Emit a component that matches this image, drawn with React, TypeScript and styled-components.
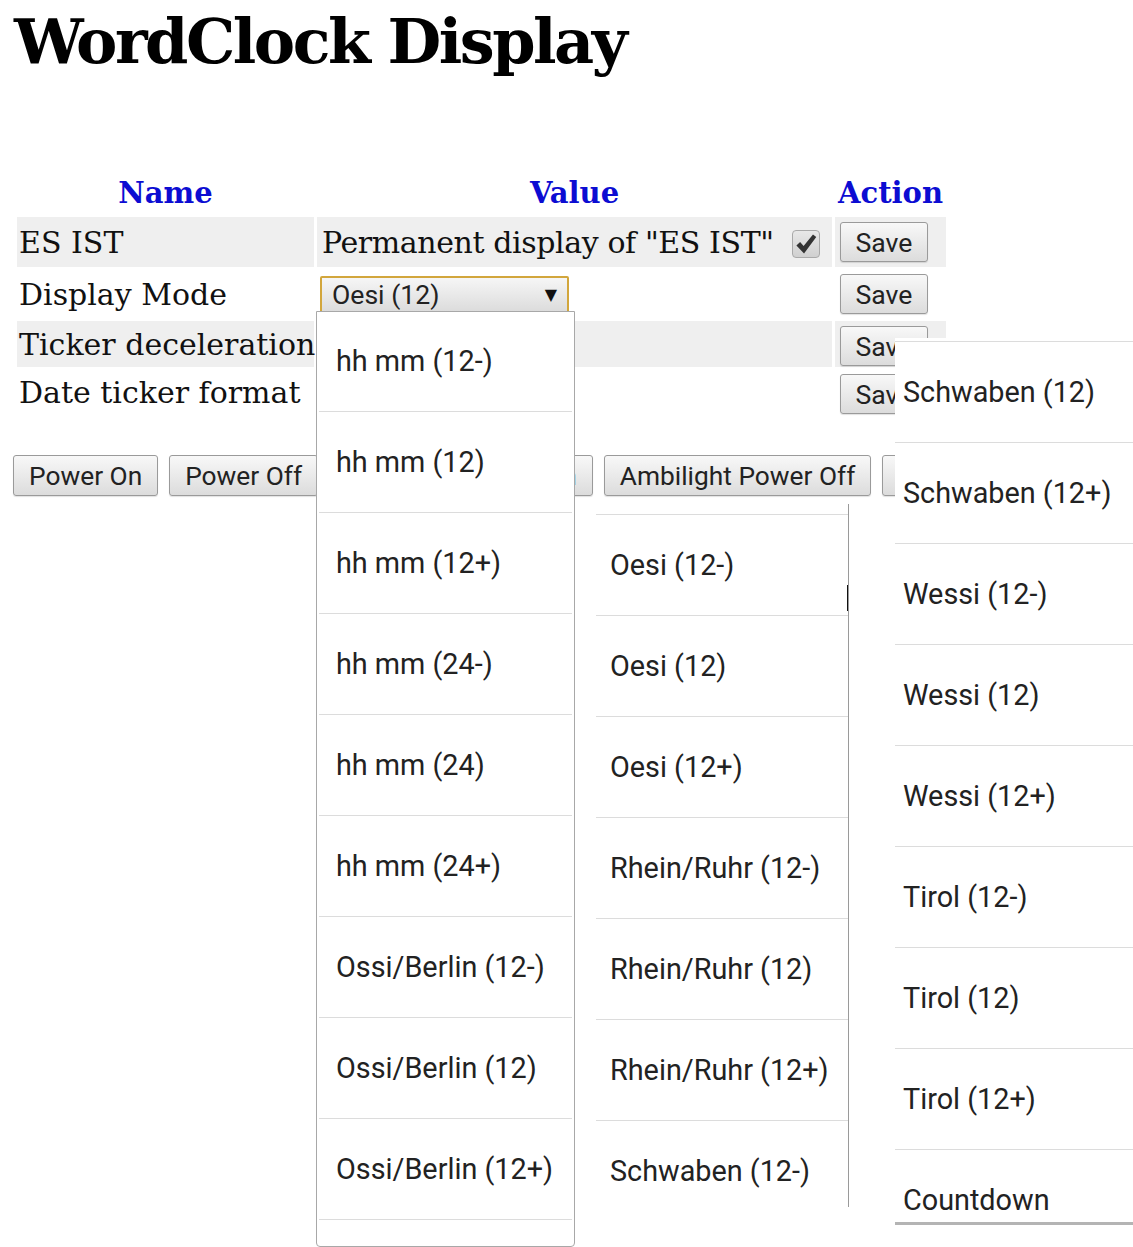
import React from 'react';
import styled, { createGlobalStyle } from 'styled-components';

const GlobalStyle = createGlobalStyle`
  html, body {
    margin: 0;
    padding: 0;
    background: #ffffff;
    overflow: hidden;
  }
  body {
    font-family: "DejaVu Serif", "Liberation Serif", serif;
    color: #111;
  }
`;

const Page = styled.div`
  position: relative;
  width: 1133px;
  height: 1247px;
  padding: 0 0 0 14px;
  box-sizing: border-box;
`;

const Title = styled.h1`
  margin: 0;
  padding-top: 2px;
  height: 166px;
  font-family: "DejaVu Serif", serif;
  font-size: 62px;
  font-weight: bold;
  line-height: 80px;
  letter-spacing: -2.5px;
  color: #000;
`;

const Table = styled.table`
  border-collapse: separate;
  border-spacing: 3px 2px;
  table-layout: fixed;
  width: 935px;
`;

const Col = styled.col<{ $w: number }>`
  width: ${(p) => p.$w}px;
`;

const HeadCell = styled.th`
  height: 45px;
  padding: 0;
  font-size: 29px;
  font-weight: bold;
  color: #0c0cd2;
  text-align: center;
`;

const Cell = styled.td<{ $shaded?: boolean; $h: number }>`
  height: ${(p) => p.$h}px;
  padding: 0 0 0 2px;
  background: ${(p) => (p.$shaded ? '#efefef' : 'transparent')};
  font-size: 30px;
  white-space: nowrap;
  vertical-align: middle;
  box-sizing: border-box;
  overflow: visible;
`;

const ValueCell = styled(Cell)`
  padding-left: 5px;
  letter-spacing: -0.4px;
`;

const ActionCell = styled(Cell)`
  padding: 5px 0 0 5px;
  vertical-align: top;
`;

const Check = styled.span`
  display: inline-flex;
  align-items: center;
  justify-content: center;
  width: 28px;
  height: 28px;
  margin-left: 18px;
  vertical-align: -3px;
  box-sizing: border-box;
  border: 1px solid #a9a9a9;
  border-radius: 4px;
  background: linear-gradient(#e8e8e8, #d0d0d0);
`;

const Button = styled.button`
  height: 41px;
  padding: 0 15px;
  font-family: Roboto, "Noto Sans", sans-serif;
  font-size: 26.3px;
  color: #222;
  background: linear-gradient(#f8f8f8, #dcdcdc);
  border: 1px solid #9a9a9a;
  border-radius: 3px;
  box-shadow: 0 1px 1px rgba(0, 0, 0, 0.12);
  white-space: nowrap;
`;

const SaveButton = styled(Button)`
  height: 40px;
  width: 88px;
  padding: 0;
  font-size: 26.6px;
`;

const Select = styled.div`
  display: flex;
  align-items: center;
  justify-content: space-between;
  width: 249px;
  height: 37px;
  box-sizing: border-box;
  margin-left: -2px;
  padding: 0 10px 0 10px;
  border: 2px solid #d2a63c;
  border-radius: 2px;
  background: linear-gradient(#f6f6f6, #dcdcdc);
  font-family: Roboto, "Noto Sans", sans-serif;
  font-size: 26.6px;
  letter-spacing: 0;
  color: #222;
`;

const Arrow = styled.span`
  font-family: "DejaVu Sans", sans-serif;
  font-size: 16px;
  color: #111;
`;

const ButtonRow = styled.div`
  display: flex;
  gap: 11px;
  margin: 38px 0 0 -1px;
`;

const Panel = styled.div<{ $left: number; $top: number; $width: number; $height: number }>`
  position: absolute;
  left: ${(p) => p.$left}px;
  top: ${(p) => p.$top}px;
  width: ${(p) => p.$width}px;
  height: ${(p) => p.$height}px;
  background: #fff;
  overflow: hidden;
  box-sizing: border-box;
`;

const PanelMain = styled(Panel)`
  border: 1px solid #a8a8a8;
  border-radius: 0 0 4px 4px;
`;

const PanelMid = styled(Panel)`
  border-right: 1px solid #9a9a9a;
  padding-top: 10px;
  &::after {
    content: '';
    position: absolute;
    right: -1px;
    top: 81px;
    width: 2px;
    height: 26px;
    background: #111;
  }
`;

const PanelRight = styled(Panel)`
  padding-top: 3px;
  border-bottom: 3px solid #b4b4b4;
`;

const List = styled.div<{ $shift: number }>`
  margin-top: ${(p) => p.$shift}px;
`;

const Option = styled.div<{ $indent: number; $sepLeft: number; $sepRight: number }>`
  position: relative;
  height: 101px;
  box-sizing: border-box;
  display: flex;
  align-items: center;
  padding-left: ${(p) => p.$indent}px;
  padding-top: 1px;
  font-family: Roboto, "Noto Sans", sans-serif;
  font-size: 28.8px;
  color: #222;
  white-space: nowrap;
  &::before {
    content: '';
    position: absolute;
    top: 0;
    left: ${(p) => p.$sepLeft}px;
    right: ${(p) => p.$sepRight}px;
    height: 1px;
    background: #dcdcdc;
  }
`;

const rows = [
  { name: 'ES IST', shaded: true, h: 50 },
  { name: 'Display Mode', shaded: false, h: 50 },
  { name: 'Ticker deceleration', shaded: true, h: 46 },
  { name: 'Date ticker format', shaded: false, h: 46 },
];

const col1 = [
  'hh mm (12-)',
  'hh mm (12)',
  'hh mm (12+)',
  'hh mm (24-)',
  'hh mm (24)',
  'hh mm (24+)',
  'Ossi/Berlin (12-)',
  'Ossi/Berlin (12)',
  'Ossi/Berlin (12+)',
  '',
];
const col2 = ['Oesi (12-)', 'Oesi (12)', 'Oesi (12+)', 'Rhein/Ruhr (12-)', 'Rhein/Ruhr (12)', 'Rhein/Ruhr (12+)', 'Schwaben (12-)'];
const col3 = ['Schwaben (12)', 'Schwaben (12+)', 'Wessi (12-)', 'Wessi (12)', 'Wessi (12+)', 'Tirol (12-)', 'Tirol (12)', 'Tirol (12+)', 'Countdown'];

function CheckMark() {
  return (
    <svg width="24" height="24" viewBox="0 0 22 22">
      <path d="M2.2 12.4 L5.6 9.2 L8.8 12.8 L17.4 2.2 L20.4 4.6 L9.2 19.6 Z" fill="#333" />
    </svg>
  );
}

function renderValue(i: number) {
  if (i === 0)
    return (
      <>
        Permanent display of "ES IST"
        <Check>
          <CheckMark />
        </Check>
      </>
    );
  if (i === 1)
    return (
      <Select>
        Oesi (12)
        <Arrow>▼</Arrow>
      </Select>
    );
  return null;
}

export default function App(): JSX.Element {
  return (
    <>
      <GlobalStyle />
      <Page>
        <Title>WordClock Display</Title>
        <Table>
          <colgroup>
            <Col $w={297} />
            <Col $w={515} />
            <Col $w={111} />
          </colgroup>
          <thead>
            <tr>
              <HeadCell>Name</HeadCell>
              <HeadCell>Value</HeadCell>
              <HeadCell>Action</HeadCell>
            </tr>
          </thead>
          <tbody>
            {rows.map((r, i) => (
              <tr key={r.name}>
                <Cell $shaded={r.shaded} $h={r.h}>
                  {r.name}
                </Cell>
                <ValueCell $shaded={r.shaded} $h={r.h}>
                  {renderValue(i)}
                </ValueCell>
                <ActionCell $shaded={r.shaded} $h={r.h}>
                  <SaveButton>Save</SaveButton>
                </ActionCell>
              </tr>
            ))}
          </tbody>
        </Table>
        <ButtonRow>
          <Button>Power On</Button>
          <Button>Power Off</Button>
          <Button>Ambilight Power On</Button>
          <Button>Ambilight Power Off</Button>
          <Button>Reset</Button>
        </ButtonRow>

        <PanelMain $left={316} $top={311} $width={259} $height={936}>
          <List $shift={-2}>
            {col1.map((t, i) => (
              <Option key={i} $indent={19} $sepLeft={i === 0 ? 9999 : 2} $sepRight={2}>
                {t}
              </Option>
            ))}
          </List>
        </PanelMain>
        <PanelMid $left={592} $top={504} $width={257} $height={703}>
          <List $shift={0}>
            {col2.map((t) => (
              <Option key={t} $indent={18} $sepLeft={4} $sepRight={0}>
                {t}
              </Option>
            ))}
          </List>
        </PanelMid>
        <PanelRight $left={895} $top={338} $width={238} $height={887}>
          <List $shift={0}>
            {col3.map((t) => (
              <Option key={t} $indent={8} $sepLeft={0} $sepRight={0}>
                {t}
              </Option>
            ))}
          </List>
        </PanelRight>
      </Page>
    </>
  );
}
